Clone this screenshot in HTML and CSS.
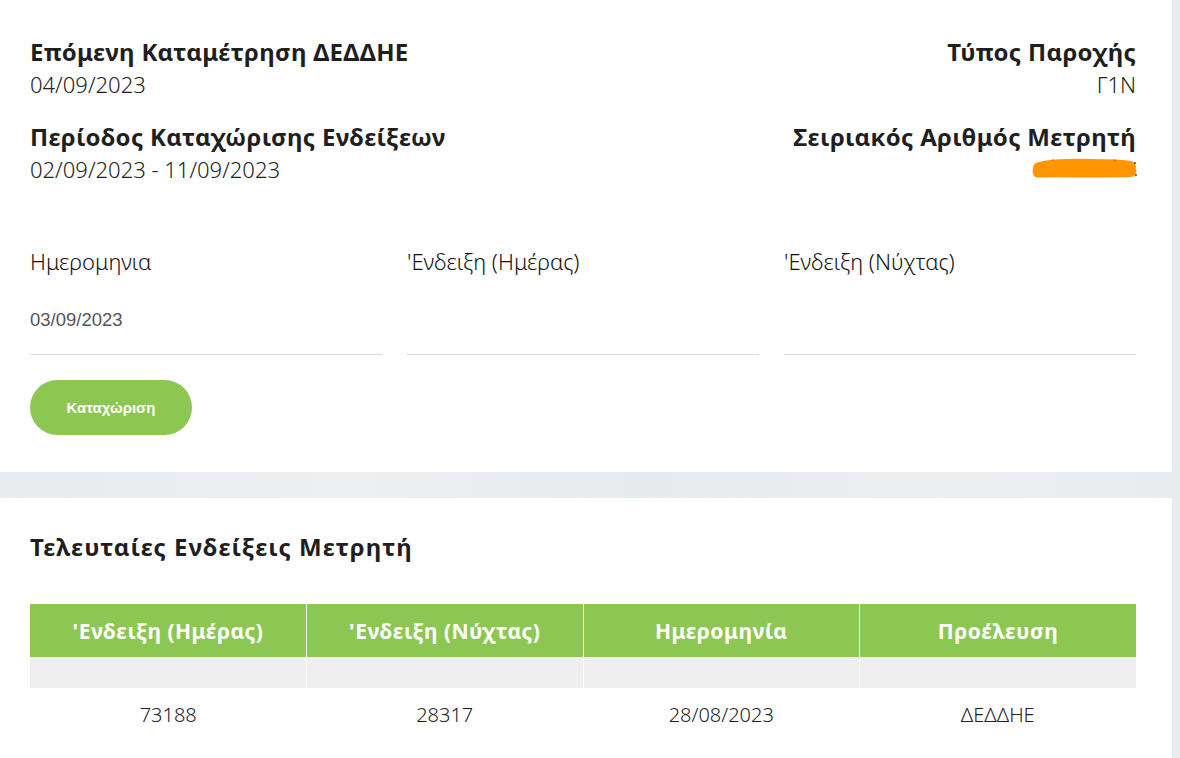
FILE: index.html
```html
<!DOCTYPE html>
<html lang="el">
<head>
<meta charset="utf-8">
<title>Καταχώριση Ενδείξεων</title>
<link rel="stylesheet" href="styles.css">
</head>
<body>
<div class="page">
  <section class="card card-form">
    <div class="info">
      <div class="info-col">
        <div class="info-item">
          <h3 class="info-title">Επόμενη Καταμέτρηση ΔΕΔΔΗΕ</h3>
          <p class="info-value">04/09/2023</p>
        </div>
        <div class="info-item">
          <h3 class="info-title">Περίοδος Καταχώρισης Ενδείξεων</h3>
          <p class="info-value">02/09/2023 - 11/09/2023</p>
        </div>
      </div>
      <div class="info-col info-col-right">
        <div class="info-item">
          <h3 class="info-title">Τύπος Παροχής</h3>
          <p class="info-value">Γ1Ν</p>
        </div>
        <div class="info-item">
          <h3 class="info-title">Σειριακός Αριθμός Μετρητή</h3>
          <p class="info-value redacted">
            <svg class="scribble" width="108" height="22" viewBox="0 0 108 22" aria-hidden="true">
              <path d="M8 10 C 22 7, 42 6.5, 60 7 C 80 7.5, 92 7, 99 9" fill="none" stroke="#ff9500" stroke-width="12" stroke-linecap="round"/>
              <path d="M7 14 C 30 13.5, 70 14.5, 100 13.5" fill="none" stroke="#ff9500" stroke-width="11" stroke-linecap="round"/>
              <circle cx="104" cy="5" r="0.9" fill="#333"/>
              <circle cx="105" cy="17" r="0.9" fill="#333"/>
              <circle cx="22" cy="2" r="0.7" fill="#666"/>
              <circle cx="84" cy="2" r="0.7" fill="#666"/>
            </svg>
          </p>
        </div>
      </div>
    </div>

    <form class="reading-form">
      <div class="fields">
        <label class="field">
          <span class="field-label">Ημερομηνια</span>
          <input class="field-input" type="text" value="03/09/2023">
        </label>
        <label class="field">
          <span class="field-label">'Ενδειξη (Ημέρας)</span>
          <input class="field-input" type="text" value="">
        </label>
        <label class="field">
          <span class="field-label">'Ενδειξη (Νύχτας)</span>
          <input class="field-input" type="text" value="">
        </label>
      </div>
      <button class="btn-submit" type="button">Καταχώριση</button>
    </form>
  </section>

  <div class="band"></div>

  <section class="card card-table">
    <h2 class="section-title">Τελευταίες Ενδείξεις Μετρητή</h2>
    <table class="readings">
      <thead>
        <tr>
          <th>'Ενδειξη (Ημέρας)</th>
          <th>'Ενδειξη (Νύχτας)</th>
          <th>Ημερομηνία</th>
          <th>Προέλευση</th>
        </tr>
      </thead>
      <tbody>
        <tr class="row-empty"><td></td><td></td><td></td><td></td></tr>
        <tr class="row-data">
          <td>73188</td>
          <td>28317</td>
          <td>28/08/2023</td>
          <td>ΔΕΔΔΗΕ</td>
        </tr>
      </tbody>
    </table>
  </section>
</div>
</body>
</html>
```

FILE: styles.css
```css
* { box-sizing: border-box; }

html, body {
  margin: 0;
  padding: 0;
  height: 758px;
  overflow: hidden;
}

body {
  background: #e9ecef;
  font-family: "Noto Sans", "DejaVu Sans", sans-serif;
  color: #222;
}

.page {
  width: 1172px;
}

.card {
  background: #fff;
  padding-left: 30px;
  padding-right: 36px;
}

.card-form {
  padding-top: 38px;
  padding-bottom: 37px;
}

.info {
  display: flex;
  justify-content: space-between;
}

.info-col {
  display: flex;
  flex-direction: column;
  gap: 25px;
}

.info-col-right {
  text-align: right;
  align-items: flex-end;
}

.info-title {
  margin: 0;
  font-size: 24px;
  line-height: 28px;
  font-weight: 700;
  letter-spacing: 0.3px;
  color: #1f1f1f;
}

.info-value {
  margin: 4px 0 0;
  font-size: 22px;
  line-height: 28px;
  font-weight: 300;
  color: #222;
}

.redacted {
  height: 28px;
  display: flex;
  align-items: center;
  justify-content: flex-end;
  margin-right: -3px;
}

.scribble { display: block; }

.reading-form {
  margin-top: 63px;
}

.fields {
  display: grid;
  grid-template-columns: repeat(3, 1fr);
  gap: 25px;
}

.field {
  display: flex;
  flex-direction: column;
}

.field-label {
  font-size: 22px;
  line-height: 30px;
  font-weight: 300;
  color: #111;
}

.field-input {
  display: block;
  width: 100%;
  height: 79px;
  padding: 34px 0 24px;
  border: 0;
  border-bottom: 1px solid #d8d8d8;
  border-radius: 0;
  background: transparent;
  font-family: "Liberation Sans", Arial, sans-serif;
  font-size: 18.5px;
  line-height: 20px;
  color: #555;
  outline: none;
}

.btn-submit {
  display: block;
  margin-top: 25px;
  width: 162px;
  height: 55px;
  border: 0;
  border-radius: 28px;
  background: #8dc753;
  color: #fff;
  font-family: "Liberation Sans", Arial, sans-serif;
  font-size: 15px;
  font-weight: 700;
  cursor: pointer;
}

.band {
  height: 26px;
  background: linear-gradient(90deg, #e8ebee 0%, #edeff1 30%, #e7eaed 55%, #eceef0 80%, #e9ecef 100%);
}

.card-table {
  padding-top: 35px;
  padding-bottom: 18px;
  height: 262px;
}

.section-title {
  margin: 0;
  font-size: 24px;
  line-height: 28px;
  font-weight: 700;
  letter-spacing: 1px;
  color: #1f1f1f;
}

.readings {
  margin-top: 43px;
  width: 100%;
  border-collapse: collapse;
  table-layout: fixed;
}

.readings th {
  height: 53px;
  padding: 0 8px;
  background: #8dc753;
  color: #fff;
  font-size: 21px;
  font-weight: 700;
  letter-spacing: 0.5px;
  text-align: center;
  border-left: 1px solid #fff;
}

.readings th:first-child,
.readings td:first-child { border-left: 0; }

.row-empty td {
  height: 31px;
  background: #efefef;
  border-left: 1px solid #fff;
}

.row-data td {
  height: 52px;
  text-align: center;
  font-size: 20px;
  font-weight: 300;
  color: #222;
}
```
